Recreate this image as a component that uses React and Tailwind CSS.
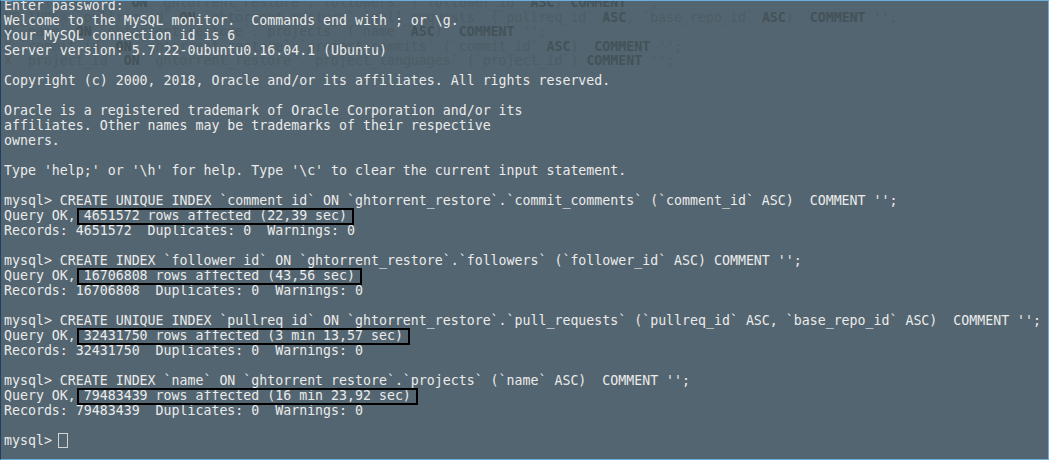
import React from 'react';

// faded text left over from an earlier screen, drawn behind the live output
const GHOST = [
  'X `follower_id` ON `ghtorrent_restore`.`followers` (`follower_id` ASC) COMMENT \'\';',
  'UE INDEX `pullreq_id` ON `ghtorrent_restore`.`pull_requests` (`pullreq_id` ASC, `base_repo_id` ASC)  COMMENT \'\';',
  'X `name` ON `ghtorrent_restore`.`projects` (`name` ASC)  COMMENT \'\';',
  'X `commit_id` ON `ghtorrent_restore`.`project_commits` (`commit_id` ASC)  COMMENT \'\';',
  'X `project_id` ON `ghtorrent_restore`.`project_languages` (`project_id`) COMMENT \'\';',
];

const KEYWORDS = /(\bON\b|\bASC\b|\bCOMMENT\b)/;

const LINES = [
  'Enter password:',
  'Welcome to the MySQL monitor.  Commands end with ; or \\g.',
  'Your MySQL connection id is 6',
  'Server version: 5.7.22-0ubuntu0.16.04.1 (Ubuntu)',
  '',
  'Copyright (c) 2000, 2018, Oracle and/or its affiliates. All rights reserved.',
  '',
  'Oracle is a registered trademark of Oracle Corporation and/or its',
  'affiliates. Other names may be trademarks of their respective',
  'owners.',
  '',
  "Type 'help;' or '\\h' for help. Type '\\c' to clear the current input statement.",
  '',
  "mysql> CREATE UNIQUE INDEX `comment_id` ON `ghtorrent_restore`.`commit_comments` (`comment_id` ASC)  COMMENT '';",
  { boxed: '4651572 rows affected (22,39 sec)' },
  'Records: 4651572  Duplicates: 0  Warnings: 0',
  '',
  "mysql> CREATE INDEX `follower_id` ON `ghtorrent_restore`.`followers` (`follower_id` ASC) COMMENT '';",
  { boxed: '16706808 rows affected (43,56 sec)' },
  'Records: 16706808  Duplicates: 0  Warnings: 0',
  '',
  "mysql> CREATE UNIQUE INDEX `pullreq_id` ON `ghtorrent_restore`.`pull_requests` (`pullreq_id` ASC, `base_repo_id` ASC)  COMMENT '';",
  { boxed: '32431750 rows affected (3 min 13,57 sec)' },
  'Records: 32431750  Duplicates: 0  Warnings: 0',
  '',
  "mysql> CREATE INDEX `name` ON `ghtorrent_restore`.`projects` (`name` ASC)  COMMENT '';",
  { boxed: '79483439 rows affected (16 min 23,92 sec)' },
  'Records: 79483439  Duplicates: 0  Warnings: 0',
  '',
];

function GhostLine({ text }) {
  return (
    <div className="h-[14.5px] leading-[14.5px]">
      {text.split(KEYWORDS).map((part, i) =>
        KEYWORDS.test(part) ? (
          <span key={i} className="font-bold text-[#44525a]">{part}</span>
        ) : (
          <span key={i}>{part}</span>
        )
      )}
    </div>
  );
}

export default function App() {
  return (
    <div
      className="relative w-[1049px] h-[460px] overflow-hidden bg-[#536570] border-t border-r border-b border-t-[#6aaedb] border-r-[#6aaedb] border-b-[#6aaedb] border-l border-l-[#22405e] pl-[3px] text-[13.25px] whitespace-pre"
      style={{ fontFamily: '"DejaVu Sans Mono", "Liberation Mono", monospace' }}
    >
      <div className="absolute left-[3px] top-[-5px] text-[#4d5d67] pointer-events-none">
        {GHOST.map((g, i) => (
          <GhostLine key={i} text={g} />
        ))}
      </div>

      <div className="relative -mt-[3px] leading-[15px] text-[#ebebeb]">
        {LINES.map((line, i) =>
          typeof line === 'string' ? (
            <div key={i} className="h-[15px]">{line || '\u00a0'}</div>
          ) : (
            <div key={i} className="h-[15px]">
              {'Query OK, '}
              <span className="relative">
                {line.boxed}
                <span className="absolute -left-[7px] -right-[7px] top-0 -bottom-[2px] border-2 border-black" />
              </span>
            </div>
          )
        )}
        <div className="h-[15px]">
          {'mysql> '}
          <span className="inline-block align-top w-[10px] h-[15px] -ml-[2px] border border-[#d4d4d4]" />
        </div>
      </div>
    </div>
  );
}
